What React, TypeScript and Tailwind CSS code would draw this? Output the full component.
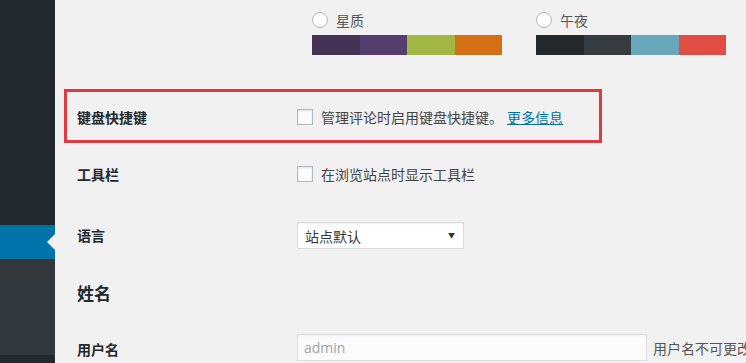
import React from "react";

const cjk = "font-['Noto_Sans_CJK_SC',_'Noto_Sans',_sans-serif]";

interface SchemeProps {
  name: string;
  colors: string[];
}

const Swatch: React.FC<{ color: string }> = ({ color }) => (
  <div className="h-full flex-1" style={{ backgroundColor: color }} />
);

const Scheme: React.FC<SchemeProps> = ({ name, colors }) => (
  <div className="flex w-[190px] flex-col">
    <div className="flex h-[16px] items-center gap-[8px]">
      <span className="h-[16px] w-[16px] rounded-full border border-[#b4b9be] bg-white shadow-[inset_0_1px_2px_rgba(0,0,0,0.07)]" />
      <span className="text-[14px] leading-none text-[#555]">{name}</span>
    </div>
    <div className="mt-[7px] flex h-[20px]">
      {colors.map((c) => (
        <Swatch key={c} color={c} />
      ))}
    </div>
  </div>
);

const Checkbox = () => (
  <span className="h-[16px] w-[16px] shrink-0 border border-[#b4b9be] bg-[#fbfbfb] shadow-[inset_0_1px_2px_rgba(0,0,0,0.1)]" />
);

const Label: React.FC<{ children: React.ReactNode }> = ({ children }) => (
  <div className="w-[220px] shrink-0 text-[14px] font-semibold leading-none text-[#23282d]">
    {children}
  </div>
);

export default function App() {
  return (
    <div className={`flex h-[363px] w-[746px] overflow-hidden ${cjk}`}>
      {/* admin sidebar */}
      <div className="flex w-[55px] shrink-0 flex-col bg-[#23282d]">
        <div className="h-[225px]" />
        <div className="relative h-[34px] bg-[#0073aa]">
          <span className="absolute right-0 top-1/2 -translate-y-1/2 border-y-[8px] border-r-[8px] border-y-transparent border-r-[#f1f1f1]" />
        </div>
        <div className="h-[96px] bg-[#32373c]" />
      </div>

      {/* settings */}
      <div className="flex flex-1 flex-col bg-[#f1f1f1]">
        <div className="flex h-[89px] gap-[34px] pl-[257px] pt-[12px]">
          <Scheme name="星质" colors={["#413256", "#523f6d", "#a3b745", "#d46f15"]} />
          <Scheme name="午夜" colors={["#25282b", "#363b3f", "#69a8bb", "#e14d43"]} />
        </div>

        <div className="ml-[9px] flex h-[54px] w-[538px] items-center border-[3px] border-[#e3383d] pl-[10px] pt-[2px]">
          <Label>键盘快捷键</Label>
          <Checkbox />
          <span className="ml-[8px] text-[14px] leading-none text-[#444]">
            管理评论时启用键盘快捷键。
          </span>
          <a href="#" className="ml-[4px] text-[14px] leading-none text-[#0073aa] underline">
            更多信息
          </a>
        </div>

        <div className="flex h-[62px] items-center pl-[22px]">
          <Label>工具栏</Label>
          <Checkbox />
          <span className="ml-[8px] text-[14px] leading-none text-[#444]">
            在浏览站点时显示工具栏
          </span>
        </div>

        <div className="flex h-[61px] items-center pl-[22px]">
          <Label>
            <span className="relative -top-[1px]">语言</span>
          </Label>
          <div className="flex h-[27px] w-[167px] items-center justify-between border border-[#ddd] bg-white pl-[7px] pr-[8px] shadow-[inset_0_1px_2px_rgba(0,0,0,0.07)]">
            <span className="text-[14px] leading-none text-[#32373c]">站点默认</span>
            <span className="text-[7px] leading-none text-[#333]">▼</span>
          </div>
        </div>

        <div className="flex h-[52px] items-center pl-[22px]">
          <h2 className="text-[17px] font-bold leading-none text-[#23282d]">姓名</h2>
        </div>

        <div className="flex items-center pl-[22px] pt-[16px]">
          <Label>
            <span className="relative top-[1px]">用户名</span>
          </Label>
          <div className="flex h-[27px] w-[350px] shrink-0 items-center border border-[#ddd] bg-[#fbfbfb] pl-[6px] shadow-[inset_0_1px_2px_rgba(0,0,0,0.04)]">
            <span className="font-['Open_Sans',_sans-serif] text-[14px] leading-none text-[#a0a5aa]">
              admin
            </span>
          </div>
          <span className="ml-[6px] whitespace-nowrap text-[14px] leading-none text-[#555]">
            用户名不可更改。
          </span>
        </div>
      </div>
    </div>
  );
}
